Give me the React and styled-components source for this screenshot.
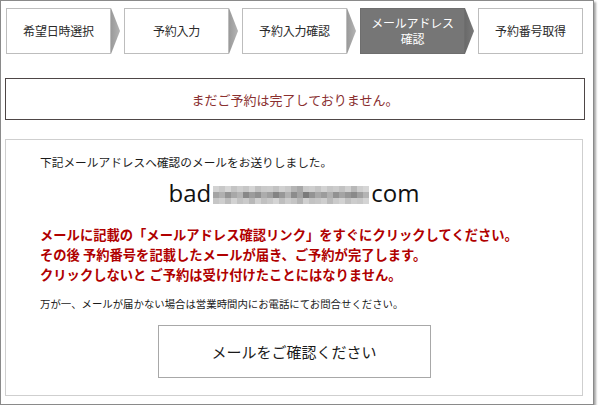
import React from "react";
import styled, { createGlobalStyle } from "styled-components";

const GlobalStyle = createGlobalStyle`
  html, body {
    margin: 0;
    padding: 0;
    background: #fff;
  }
  body {
    font-family: "Noto Sans CJK JP", "Noto Sans", sans-serif;
    color: #222;
  }
`;

const steps = [
  { label: "希望日時選択" },
  { label: "予約入力" },
  { label: "予約入力確認" },
  { label: ["メールアドレス", "確認"], active: true },
  { label: "予約番号取得" },
];

const redLines = [
  "メールに記載の「メールアドレス確認リンク」をすぐにクリックしてください。",
  "その後 予約番号を記載したメールが届き、ご予約が完了します。",
  "クリックしないと ご予約は受け付けたことにはなりません。",
];

// pixelated part of the address
const mosaicShades = [
  ["#d2d2d2", "#c8c8c8", "#d6d6d6", "#c4c4c4", "#cecece", "#c6c6c6", "#d4d4d4", "#c0c0c0", "#cacaca", "#cccccc", "#c2c2c2", "#d0d0d0", "#c8c8c8", "#b4b4b4", "#a8a8a8", "#cacaca", "#cecece", "#c4c4c4", "#d2d2d2", "#c6c6c6", "#cccccc", "#c2c2c2", "#d0d0d0", "#b8b8b8", "#cecece", "#d6d6d6"],
  ["#a4a4a4", "#b0b0b0", "#949494", "#a8a8a8", "#b4b4b4", "#888888", "#9c9c9c", "#909090", "#acacac", "#a0a0a0", "#848484", "#989898", "#b2b2b2", "#8c8c8c", "#a2a2a2", "#7a7a7a", "#949494", "#a8a8a8", "#9c9c9c", "#b0b0b0", "#929292", "#a4a4a4", "#969696", "#8a8a8a", "#a0a0a0", "#b4b4b4"],
  ["#c6c6c6", "#cecece", "#bcbcbc", "#d2d2d2", "#c2c2c2", "#cacaca", "#b8b8b8", "#d0d0d0", "#c0c0c0", "#c8c8c8", "#d4d4d4", "#bebebe", "#cccccc", "#c4c4c4", "#b4b4b4", "#d0d0d0", "#c2c2c2", "#c6c6c6", "#cecece", "#bababa", "#cacaca", "#d2d2d2", "#c0c0c0", "#cccccc", "#c8c8c8", "#d4d4d4"],
];

const Mosaic = () => (
  <MosaicWrap>
    <svg width="156" height="18" viewBox="0 0 156 18">
      {mosaicShades.map((row, r) =>
        row.map((c, i) => (
          <rect key={r + "-" + i} x={i * 6} y={r * 6} width="6" height="6" fill={c} />
        ))
      )}
    </svg>
  </MosaicWrap>
);

const App = () => {
  return (
    <>
      <GlobalStyle />
      <Frame>
        <StepRow>
          {steps.map((s, i) => (
            <StepItem key={i}>
              <StepBox $active={s.active}>
                {Array.isArray(s.label)
                  ? s.label.map((l) => <span key={l}>{l}</span>)
                  : s.label}
              </StepBox>
              {i < steps.length - 1 && <Arrow $active={s.active} />}
            </StepItem>
          ))}
        </StepRow>

        <Notice>まだご予約は完了しておりません。</Notice>

        <MainBox>
          <Lead>下記メールアドレスへ確認のメールをお送りしました。</Lead>
          <Email>
            bad
            <Mosaic />
            com
          </Email>
          <Warning>
            {redLines.map((l) => (
              <div key={l}>{l}</div>
            ))}
          </Warning>
          <Small>万が一、メールが届かない場合は営業時間内にお電話にてお問合せください。</Small>
          <ButtonRow>
            <ConfirmButton>メールをご確認ください</ConfirmButton>
          </ButtonRow>
        </MainBox>
      </Frame>
    </>
  );
};

const Frame = styled.div`
  box-sizing: border-box;
  width: 594px;
  height: 405px;
  border: 1px solid #8a8a8a;
  box-shadow: 2px 2px 2px rgba(0, 0, 0, 0.35);
  padding: 7px 10px 0 4px;
  background: #fff;
`;

const StepRow = styled.div`
  display: flex;
  justify-content: space-between;
  height: 46px;
  margin-left: 1px;
`;

const StepItem = styled.div`
  display: flex;
`;

const StepBox = styled.div`
  box-sizing: border-box;
  width: 105px;
  height: 46px;
  border: 1px solid ${(p) => (p.$active ? "#6e6e6e" : "#bdbdbd")};
  background: ${(p) => (p.$active ? "#767676" : "#fff")};
  color: ${(p) => (p.$active ? "#fff" : "#2a2a2a")};
  display: flex;
  flex-direction: column;
  align-items: center;
  justify-content: center;
  font-size: 12px;
  line-height: 16px;
  letter-spacing: -0.2px;
`;

const Arrow = styled.div`
  width: 9px;
  height: 46px;
  background: ${(p) =>
    p.$active
      ? "linear-gradient(90deg, #6a6a6a, #7a7a7a)"
      : "linear-gradient(90deg, #9a9a9a, #b4b4b4)"};
  clip-path: polygon(0 0, 100% 50%, 0 100%);
`;

const Notice = styled.div`
  box-sizing: border-box;
  margin-top: 24px;
  width: 580px;
  height: 42px;
  border: 1px solid #4e4646;
  display: flex;
  align-items: center;
  justify-content: center;
  color: #8a3030;
  font-size: 13px;
`;

const MainBox = styled.div`
  box-sizing: border-box;
  margin-top: 19px;
  width: 578px;
  height: 257px;
  border: 1px solid #cfcfcf;
  padding: 14px 20px 0 34px;
  display: flex;
  flex-direction: column;
`;

const Lead = styled.div`
  font-size: 11.7px;
  line-height: 16px;
  color: #1a1a1a;
`;

const Email = styled.div`
  margin-top: 9px;
  display: flex;
  align-items: center;
  justify-content: center;
  margin-left: -14px;
  font-family: "Open Sans", "Liberation Sans", sans-serif;
  font-size: 24px;
  line-height: 28px;
  color: #111;
`;

const MosaicWrap = styled.span`
  display: inline-flex;
  margin: 4px 2px 0 2px;
`;

const Warning = styled.div`
  margin-top: 18px;
  color: #b00000;
  font-weight: bold;
  font-size: 13.3px;
  line-height: 20px;
`;

const Small = styled.div`
  margin-top: 12px;
  font-size: 10.4px;
  line-height: 14px;
  color: #1a1a1a;
`;

const ButtonRow = styled.div`
  display: flex;
  justify-content: center;
  margin-top: 14px;
  margin-left: -14px;
`;

const ConfirmButton = styled.div`
  box-sizing: border-box;
  width: 273px;
  height: 53px;
  border: 1px solid #a8a8a8;
  display: flex;
  align-items: center;
  justify-content: center;
  font-size: 15px;
  color: #1a1a1a;
`;

export default App;
